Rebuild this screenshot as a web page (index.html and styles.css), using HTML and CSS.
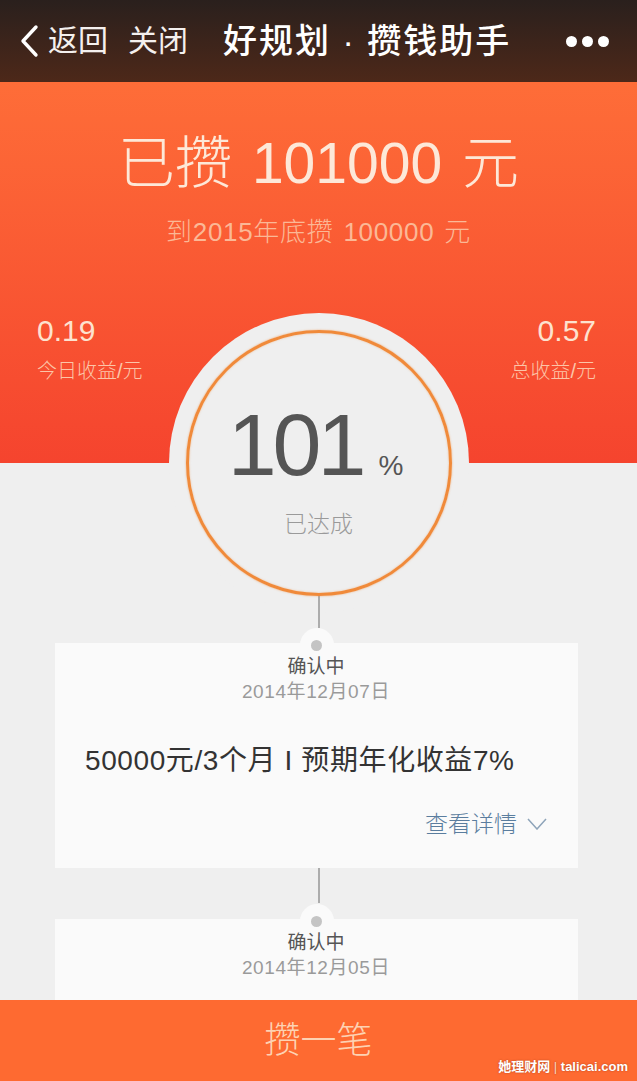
FILE: index.html
```html
<!DOCTYPE html>
<html lang="zh-CN">
<head>
<meta charset="utf-8">
<title>好规划 · 攒钱助手</title>
<link rel="stylesheet" href="styles.css">
</head>
<body>
<div class="page">
  <header class="topbar">
    <svg class="back-icon" width="22" height="34" viewBox="0 0 22 34"><polyline points="18,3 5,17 18,31" fill="none" stroke="#fff" stroke-width="3.4" stroke-linecap="round" stroke-linejoin="round"/></svg>
    <span class="nav-link">返回</span>
    <span class="nav-link close">关闭</span>
    <span class="title">好规划 · 攒钱助手</span>
    <span class="more"><i></i><i></i><i></i></span>
  </header>

  <section class="hero">
    <h1 class="saved">已攒 101000 元</h1>
    <p class="goal">到2015年底攒 100000 元</p>
    <div class="stats">
      <div class="stat">
        <div class="stat-value">0.19</div>
        <div class="stat-label">今日收益/元</div>
      </div>
      <div class="stat right">
        <div class="stat-value">0.57</div>
        <div class="stat-label">总收益/元</div>
      </div>
    </div>
  </section>

  <div class="gauge">
    <div class="ring">
      <div class="pct"><span class="pct-num">101</span><span class="pct-sign">%</span></div>
      <div class="pct-label">已达成</div>
    </div>
  </div>

  <div class="connector"></div>
  <div class="card">
    <div class="status">确认中</div>
    <div class="date">2014年12月07日</div>
    <div class="plan">50000元/3个月 I 预期年化收益7%</div>
    <div class="details">查看详情 <svg width="20" height="12" viewBox="0 0 20 12"><polyline points="1,1 10,11 19,1" fill="none" stroke="#8ea4b9" stroke-width="1.5"/></svg></div>
  </div>

  <div class="connector second"></div>
  <div class="card last">
    <div class="status">确认中</div>
    <div class="date">2014年12月05日</div>
  </div>

  <footer class="action-bar">
    <span class="action">攒一笔</span>
    <span class="watermark">她理财网 <span class="sep">|</span> talicai.com</span>
  </footer>
</div>
</body>
</html>
```
FILE: styles.css
```css
html, body {
  margin: 0;
  padding: 0;
  background: #efefef;
}
body {
  font-family: "Liberation Sans", "Noto Sans CJK SC", sans-serif;
  width: 637px;
  height: 1081px;
  overflow: hidden;
}
.page {
  width: 637px;
}
.topbar {
  height: 82px;
  display: flex;
  align-items: center;
  padding-left: 18px;
  background: linear-gradient(#2a201d, #4d2819);
  color: #fff;
  box-sizing: border-box;
}
.back-icon {
  display: block;
  flex: none;
}
.nav-link {
  font-size: 30px;
  margin-left: 8px;
  color: #f4f0ee;
  line-height: 40px;
}
.nav-link.close {
  margin-left: 20px;
}
.title {
  font-size: 34px;
  font-weight: 500;
  margin-left: 35px;
  line-height: 40px;
  letter-spacing: 2px;
  word-spacing: 0;
}
.more {
  margin-left: auto;
  margin-right: 28px;
  display: flex;
  gap: 5px;
}
.more i {
  width: 11px;
  height: 11px;
  border-radius: 50%;
  background: #fff;
}

.hero {
  height: 381px;
  box-sizing: border-box;
  padding-top: 49px;
  background: linear-gradient(#fe6d38, #f5442e);
  text-align: center;
}
.saved {
  margin: 0;
  font-size: 57px;
  line-height: 64px;
  font-weight: 300;
  color: #fde8d8;
  word-spacing: 4px;
}
.goal {
  margin: 21px 0 0;
  font-size: 26px;
  line-height: 32px;
  color: #fbb896;
  font-weight: 300;
  word-spacing: 2px;
  letter-spacing: 0.7px;
}
.stats {
  margin-top: 65px;
  display: flex;
  justify-content: space-between;
  padding: 0 41px 0 37px;
}
.stat {
  text-align: left;
}
.stat.right {
  text-align: right;
}
.stat-value {
  font-size: 30px;
  line-height: 36px;
  color: #fde2cf;
}
.stat-label {
  margin-top: 10px;
  font-size: 20px;
  line-height: 24px;
  color: #fcc5a8;
  font-weight: 300;
}

.gauge {
  width: 300px;
  height: 300px;
  margin: -150px auto -17px;
  border-radius: 50%;
  background: #efefef;
  display: flex;
  align-items: center;
  justify-content: center;
}
.ring {
  width: 266px;
  height: 266px;
  box-sizing: border-box;
  border: 3px solid #f08a3a;
  border-radius: 50%;
  box-shadow: 0 0 2px rgba(240, 138, 58, 0.7), inset 0 0 2px rgba(240, 138, 58, 0.5);
  display: flex;
  flex-direction: column;
  align-items: center;
  padding-top: 67px;
}
.pct {
  display: flex;
  align-items: baseline;
  height: 90px;
  margin-right: 6px;
}
.pct-num {
  font-size: 88px;
  line-height: 90px;
  color: #555;
  letter-spacing: -4px;
}
.pct-sign {
  font-size: 28px;
  color: #555;
  margin-left: 16px;
}
.pct-label {
  margin-top: 19px;
  font-size: 23px;
  line-height: 30px;
  color: #9a9a9a;
  font-weight: 300;
}

.connector {
  width: 2px;
  height: 32px;
  margin: 0 auto;
  background: #acacac;
}
.connector.second {
  height: 35px;
}
.card {
  position: relative;
  margin: 15px 0 0 55px;
  width: 523px;
  background: #fafafa;
  box-sizing: border-box;
  padding: 11px 31px 29px 30px;
  text-align: center;
}
.card.last {
  margin-top: 16px;
  padding-bottom: 80px;
}
.card::before {
  content: "";
  position: absolute;
  left: 50%;
  top: -15px;
  width: 34px;
  height: 34px;
  margin-left: -17px;
  border-radius: 50%;
  background: #fafafa;
}
.card::after {
  content: "";
  position: absolute;
  left: 50%;
  top: -3px;
  width: 11px;
  height: 11px;
  margin-left: -5.5px;
  border-radius: 50%;
  background: #c4c4c4;
}
.status {
  position: relative;
  font-size: 19px;
  line-height: 26px;
  color: #555;
}
.date {
  font-size: 19px;
  line-height: 24px;
  color: #9a9a9a;
  letter-spacing: 0.6px;
}
.plan {
  margin-top: 37px;
  text-align: left;
  font-size: 28px;
  line-height: 40px;
  color: #333;
  letter-spacing: 0.6px;
}
.details {
  margin-top: 28px;
  display: flex;
  justify-content: flex-end;
  align-items: center;
  gap: 10px;
  font-size: 23px;
  line-height: 30px;
  color: #5a7d9e;
  font-weight: 300;
}
.details svg {
  display: block;
}

.action-bar {
  position: fixed;
  left: 0;
  bottom: 0;
  width: 637px;
  height: 81px;
  background: #fe6a31;
  display: flex;
  align-items: center;
  justify-content: center;
}
.action {
  font-size: 36px;
  color: #fdd2b3;
  font-weight: 300;
  line-height: 40px;
}
.watermark {
  position: absolute;
  right: 9px;
  bottom: 6px;
  font-size: 13px;
  color: #fff;
  font-weight: 700;
  text-shadow: 0 0 2px rgba(120, 40, 10, 0.6);
}
.watermark .sep {
  font-weight: 300;
  color: #fbd6c4;
}
```
